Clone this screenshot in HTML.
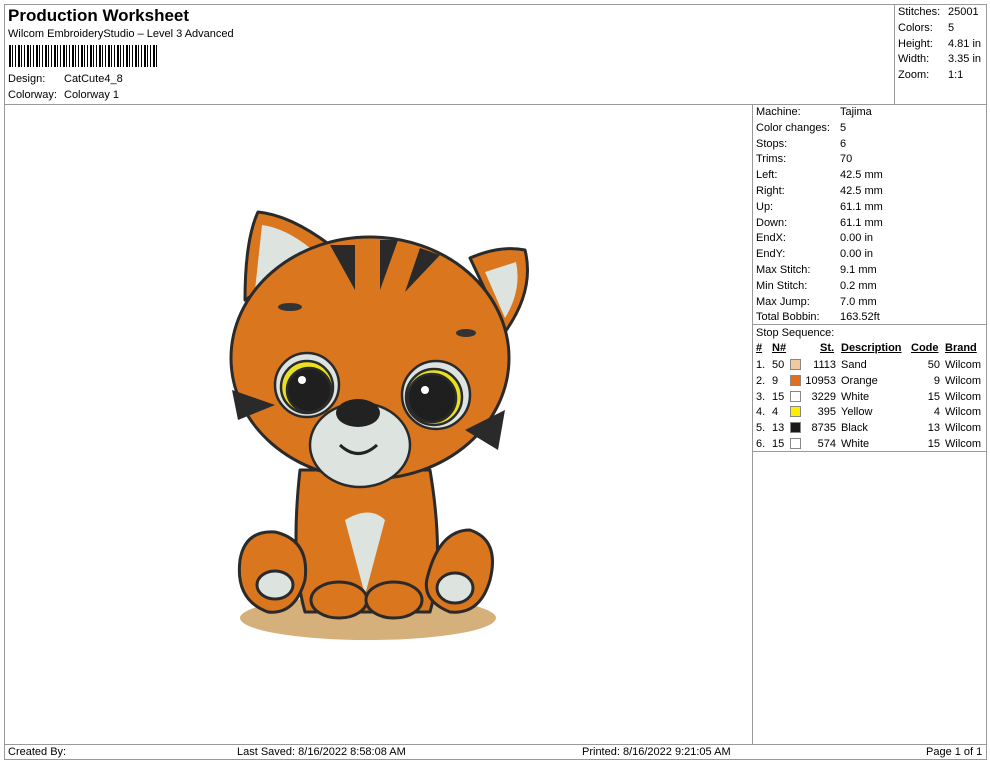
<!DOCTYPE html>
<html><head><meta charset="utf-8"><style>
body{margin:0;width:990px;height:762px;background:#fff;font-family:"Liberation Sans",Arial,sans-serif;font-size:11px;color:#000;position:relative;overflow:hidden}
.a{position:absolute;white-space:nowrap}
.l{position:absolute;background:#999}
</style></head><body>
<div class="l" style="left:4px;top:4px;width:982px;height:1px"></div>
<div class="l" style="left:4px;top:4px;width:1px;height:756px"></div>
<div class="l" style="left:986px;top:4px;width:1px;height:756px"></div>
<div class="l" style="left:4px;top:104px;width:982px;height:1px"></div>
<div class="l" style="left:894px;top:4px;width:1px;height:100px"></div>
<div class="l" style="left:752px;top:104px;width:1px;height:640px"></div>
<div class="l" style="left:752px;top:324px;width:234px;height:1px"></div>
<div class="l" style="left:752px;top:451px;width:234px;height:1px"></div>
<div class="l" style="left:4px;top:744px;width:982px;height:1px"></div>
<div class="l" style="left:4px;top:759px;width:982px;height:1px"></div>

<div class="a" style="left:8px;top:6px;font-size:17px;font-weight:bold">Production Worksheet</div>
<div class="a" style="left:8px;top:28px">Wilcom EmbroideryStudio – Level 3 Advanced</div>
<div class="a" style="left:9px;top:45px;width:148px;height:22px;background:repeating-linear-gradient(90deg,#000 0 2px,#fff 2px 3px,#000 3px 4px,#fff 4px 6px,#000 6px 7px,#fff 7px 9px)"></div>
<div class="a" style="left:8px;top:73px">Design:</div><div class="a" style="left:64px;top:73px">CatCute4_8</div>
<div class="a" style="left:8px;top:89px">Colorway:</div><div class="a" style="left:64px;top:89px">Colorway 1</div>

<div class="a" style="left:898px;top:5px;line-height:15.8px">Stitches:<br>Colors:<br>Height:<br>Width:<br>Zoom:</div>
<div class="a" style="left:948px;top:5px;line-height:15.8px">25001<br>5<br>4.81 in<br>3.35 in<br>1:1</div>

<div class="a" style="left:756px;top:105px;line-height:15.8px">Machine:<br>Color changes:<br>Stops:<br>Trims:<br>Left:<br>Right:<br>Up:<br>Down:<br>EndX:<br>EndY:<br>Max Stitch:<br>Min Stitch:<br>Max Jump:<br>Total Bobbin:<br>Stop Sequence:</div>
<div class="a" style="left:840px;top:105px;line-height:15.8px">Tajima<br>5<br>6<br>70<br>42.5 mm<br>42.5 mm<br>61.1 mm<br>61.1 mm<br>0.00 in<br>0.00 in<br>9.1 mm<br>0.2 mm<br>7.0 mm<br>163.52ft</div>

<div class="a" style="left:756px;top:342px;font-weight:bold;text-decoration:underline">#</div>
<div class="a" style="left:772px;top:342px;font-weight:bold;text-decoration:underline">N#</div>
<div class="a" style="left:820px;top:342px;font-weight:bold;text-decoration:underline">St.</div>
<div class="a" style="left:841px;top:342px;font-weight:bold;text-decoration:underline">Description</div>
<div class="a" style="left:911px;top:342px;font-weight:bold;text-decoration:underline">Code</div>
<div class="a" style="left:945px;top:342px;font-weight:bold;text-decoration:underline">Brand</div>
<div class="a" style="left:756px;top:358px;line-height:15.8px">1.<br>2.<br>3.<br>4.<br>5.<br>6.</div>
<div class="a" style="left:772px;top:358px;line-height:15.8px">50<br>9<br>15<br>4<br>13<br>15</div>
<div class="a" style="left:790px;top:359px;width:9px;height:9px;border:1px solid #888;background:#f2c8a0"></div>
<div class="a" style="left:790px;top:375px;width:9px;height:9px;border:1px solid #888;background:#e07020"></div>
<div class="a" style="left:790px;top:391px;width:9px;height:9px;border:1px solid #888;background:#fff"></div>
<div class="a" style="left:790px;top:406px;width:9px;height:9px;border:1px solid #888;background:#ffee00"></div>
<div class="a" style="left:790px;top:422px;width:9px;height:9px;border:1px solid #888;background:#1a1a1a"></div>
<div class="a" style="left:790px;top:438px;width:9px;height:9px;border:1px solid #888;background:#fff"></div>
<div class="a" style="left:800px;top:358px;width:36px;text-align:right;line-height:15.8px">1113<br>10953<br>3229<br>395<br>8735<br>574</div>
<div class="a" style="left:841px;top:358px;line-height:15.8px">Sand<br>Orange<br>White<br>Yellow<br>Black<br>White</div>
<div class="a" style="left:900px;top:358px;width:40px;text-align:right;line-height:15.8px">50<br>9<br>15<br>4<br>13<br>15</div>
<div class="a" style="left:945px;top:358px;line-height:15.8px">Wilcom<br>Wilcom<br>Wilcom<br>Wilcom<br>Wilcom<br>Wilcom</div>

<div class="a" style="left:8px;top:746px">Created By:</div>
<div class="a" style="left:237px;top:746px">Last Saved: 8/16/2022 8:58:08 AM</div>
<div class="a" style="left:582px;top:746px">Printed: 8/16/2022 9:21:05 AM</div>
<div class="a" style="left:926px;top:746px">Page 1 of 1</div>

<svg class="a" style="left:0;top:0" width="990" height="762" viewBox="0 0 990 762">
<g stroke="#2a2a2a" stroke-width="3" stroke-linejoin="round">
<ellipse cx="368" cy="618" rx="128" ry="22" fill="#d6b07a" stroke="none"/>
<path d="M245 300 Q245 240 258 212 Q290 215 330 245 Z" fill="#d9761e"/>
<path d="M255 290 L262 225 Q285 228 310 248 Z" fill="#dde4e0" stroke="none"/>
<path d="M470 258 Q500 245 525 250 Q535 290 505 332 Z" fill="#d9761e"/>
<path d="M485 272 L516 262 Q522 290 505 318 Z" fill="#dde4e0" stroke="none"/>
<path d="M300 470 Q290 560 305 612 L430 612 Q445 560 430 470 Z" fill="#d9761e"/>
<path d="M345 520 Q370 505 385 520 L365 595 Z" fill="#dde4e0" stroke="none"/>
<ellipse cx="339" cy="600" rx="28" ry="18" fill="#d9761e"/>
<ellipse cx="394" cy="600" rx="28" ry="18" fill="#d9761e"/>
<path d="M240 560 Q245 530 275 532 Q310 540 305 580 Q295 615 268 612 Q235 600 240 560 Z" fill="#d9761e"/>
<ellipse cx="275" cy="585" rx="18" ry="14" fill="#dde4e0"/>
<path d="M428 575 Q440 530 470 530 Q500 540 490 580 Q480 615 450 612 Q420 600 428 575 Z" fill="#d9761e"/>
<ellipse cx="455" cy="588" rx="18" ry="15" fill="#dde4e0"/>
<ellipse cx="370" cy="358" rx="139" ry="121" fill="#d9761e"/>
</g>
<path d="M330 245 L355 245 L355 290 Z M380 240 L398 240 L380 290 Z M420 248 L440 255 L405 292 Z" fill="#2a2a2a"/>
<path d="M232 390 L275 405 L238 420 Z M505 410 L465 430 L498 450 Z" fill="#2a2a2a"/>
<g stroke="#2a2a2a" stroke-width="2.5">
<circle cx="307" cy="385" r="32" fill="#dde4e0"/>
<circle cx="307" cy="387" r="26" fill="#e8e020"/>
<circle cx="309" cy="390" r="22" fill="#1f1f1f"/>
<circle cx="436" cy="395" r="34" fill="#dde4e0"/>
<circle cx="434" cy="397" r="28" fill="#e8e020"/>
<circle cx="432" cy="398" r="24" fill="#1f1f1f"/>
<ellipse cx="360" cy="445" rx="50" ry="42" fill="#dde4e0"/>
</g>
<circle cx="302" cy="380" r="4" fill="#fff"/><circle cx="425" cy="390" r="4" fill="#fff"/>
<ellipse cx="358" cy="413" rx="22" ry="14" fill="#222"/>
<path d="M340 445 Q358 462 377 445" stroke="#222" stroke-width="3" fill="none"/>
<ellipse cx="290" cy="307" rx="12" ry="4" fill="#333"/><ellipse cx="466" cy="333" rx="10" ry="4" fill="#333"/>
</svg>
</body></html>
